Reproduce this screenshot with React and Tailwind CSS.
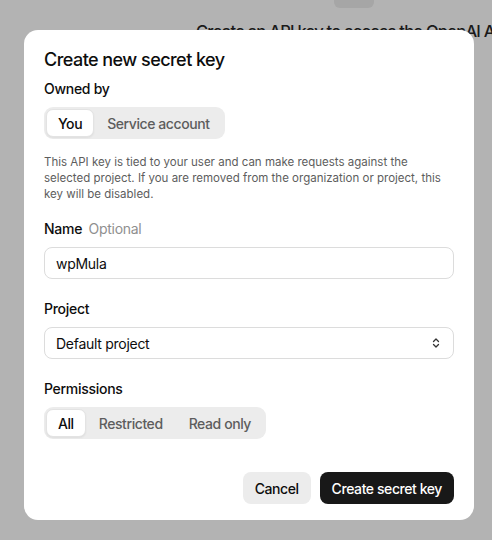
import { useState } from 'react';

const Segmented = ({ options, value, onChange }) => (
  <div className="inline-flex items-center rounded-[9px] bg-[#ececec] p-[2px]">
    {options.map((opt) => (
      <button
        key={opt}
        onClick={() => onChange(opt)}
        className={
          opt === value
            ? 'h-[28px] px-[11px] rounded-[7px] bg-white border border-[#e3e3e3] shadow-[0_1px_2px_rgba(0,0,0,0.06)] text-[14px] tracking-[-0.03em] font-medium text-[#0d0d0d]'
            : 'h-[28px] px-[13px] rounded-[7px] text-[14px] tracking-[-0.03em] font-medium text-[#5d5d5d]'
        }
      >
        {opt}
      </button>
    ))}
  </div>
);

const App = () => {
  const [owner, setOwner] = useState('You');
  const [perm, setPerm] = useState('All');
  const [name, setName] = useState('wpMula');

  return (
    <div
      className="relative w-[492px] h-[540px] overflow-hidden bg-[#b3b3b3]"
      style={{ fontFamily: 'Inter, "Noto Sans", sans-serif' }}
    >
      {/* page behind the overlay */}
      <div className="absolute left-[334px] top-[-8px] w-[40px] h-[16px] rounded-[6px] bg-[#a6a6a6]" />
      <div className="absolute left-[196px] top-[19px] whitespace-nowrap text-[16.5px] tracking-[-0.045em] font-medium text-[#1a1a1a]">
        Create an API key to access the OpenAI API
      </div>

      {/* modal */}
      <div className="absolute left-[24px] top-[30px] w-[450px] rounded-[14px] bg-white px-[20px] pt-[18px] pb-[16px]">
        <h2 className="text-[18px] leading-[24px] tracking-[-0.03em] font-medium text-[#0d0d0d]">Create new secret key</h2>

        <div className="mt-[7px] text-[14px] leading-[20px] tracking-[-0.02em] font-medium text-[#0d0d0d]">Owned by</div>
        <div className="mt-[8px]">
          <Segmented options={['You', 'Service account']} value={owner} onChange={setOwner} />
        </div>

        <p className="mt-[15px] text-[11.5px] leading-[16px] text-[#5d5d5d]">
          This API key is tied to your user and can make requests against the selected project. If you are removed from the organization or project, this key will be disabled.
        </p>

        <div className="mt-[17px] text-[14px] leading-[20px] tracking-[-0.02em] font-medium text-[#0d0d0d]">
          Name <span className="ml-[3px] font-normal text-[#8f8f8f]">Optional</span>
        </div>
        <input
          value={name}
          onChange={(e) => setName(e.target.value)}
          className="mt-[8px] block w-full h-[32px] rounded-[8px] border border-[#dcdcdc] px-[11px] text-[14px] tracking-[-0.02em] text-[#0d0d0d] outline-none"
        />

        <div className="mt-[20px] text-[14px] leading-[20px] tracking-[-0.02em] font-medium text-[#0d0d0d]">Project</div>
        <button className="mt-[8px] flex w-full h-[32px] items-center justify-between rounded-[8px] border border-[#dcdcdc] px-[11px] text-[14px] tracking-[-0.02em] text-[#0d0d0d]">
          <span>Default project</span>
          <svg width="12" height="12" viewBox="0 0 12 12" fill="none" stroke="#333" strokeWidth="1.3" strokeLinecap="round" strokeLinejoin="round">
            <path d="M3.5 4.5 6 2l2.5 2.5" />
            <path d="M3.5 7.5 6 10l2.5-2.5" />
          </svg>
        </button>

        <div className="mt-[20px] text-[14px] leading-[20px] tracking-[-0.02em] font-medium text-[#0d0d0d]">Permissions</div>
        <div className="mt-[8px]">
          <Segmented options={['All', 'Restricted', 'Read only']} value={perm} onChange={setPerm} />
        </div>

        <div className="mt-[33px] flex justify-end gap-[9px]">
          <button className="h-[32px] rounded-[8px] bg-[#ececec] px-[12px] text-[14px] tracking-[-0.03em] font-medium text-[#0d0d0d]">Cancel</button>
          <button className="h-[32px] rounded-[8px] bg-[#181818] px-[12px] text-[14px] tracking-[-0.03em] font-medium text-white">Create secret key</button>
        </div>
      </div>
    </div>
  );
};

export default App;
